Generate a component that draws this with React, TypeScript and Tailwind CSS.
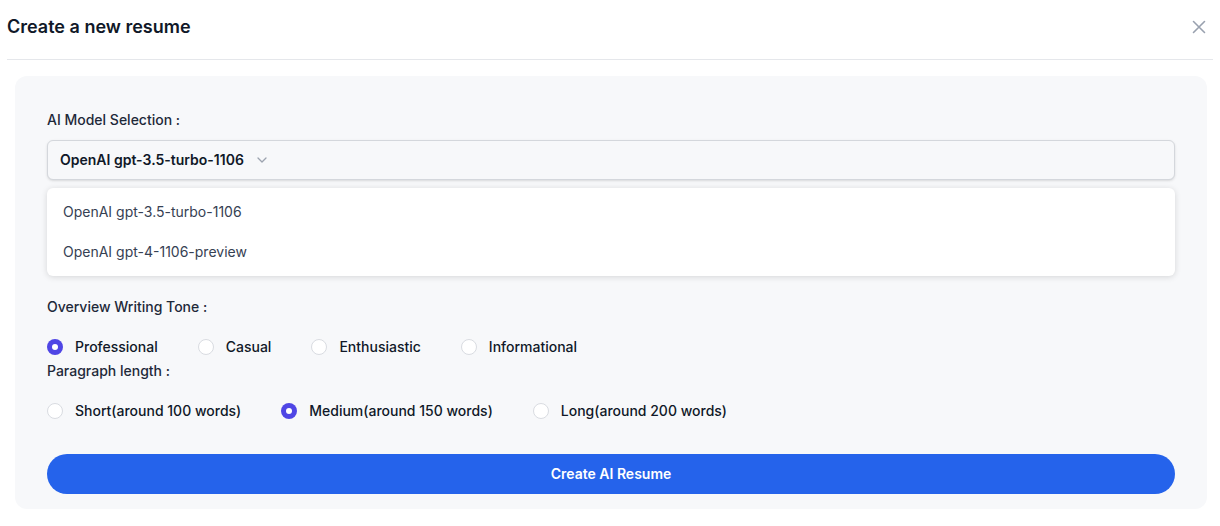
import React, { useState } from 'react';

const MODELS = ['OpenAI gpt-3.5-turbo-1106', 'OpenAI gpt-4-1106-preview'];
const TONES = ['Professional', 'Casual', 'Enthusiastic', 'Informational'];
const LENGTHS = ['Short(around 100 words)', 'Medium(around 150 words)', 'Long(around 200 words)'];

function Radio({ label, checked, onClick }: { label: string; checked: boolean; onClick: () => void }) {
  return (
    <label className="flex items-center gap-3 cursor-pointer h-5" onClick={onClick}>
      {checked ? (
        <span className="w-4 h-4 rounded-full bg-[#4f46e5] flex items-center justify-center">
          <span className="w-1.5 h-1.5 rounded-full bg-white"></span>
        </span>
      ) : (
        <span className="w-4 h-4 rounded-full bg-white border border-[#d9dce1]"></span>
      )}
      <span className="text-sm font-medium text-gray-900">{label}</span>
    </label>
  );
}

export default function App() {
  const [model] = useState(MODELS[0]);
  const [tone, setTone] = useState('Professional');
  const [length, setLength] = useState('Medium(around 150 words)');

  return (
    <div className="w-[1220px] h-[526px] bg-white px-[7px] font-['Inter',sans-serif] overflow-hidden">
      {/* Header */}
      <div className="flex items-center justify-between pt-[15px] pb-[20px] border-b border-gray-200">
        <h2 className="text-lg leading-6 font-semibold text-gray-900">Create a new resume</h2>
        <button className="mr-[7px] text-gray-400">
          <svg width="14" height="14" viewBox="0 0 14 14" fill="none" stroke="currentColor" strokeWidth="1.6" strokeLinecap="round">
            <path d="M1.5 1.5l11 11M12.5 1.5l-11 11" />
          </svg>
        </button>
      </div>

      {/* Panel */}
      <div className="ml-2 mr-[6px] mt-4 bg-[#f7f8fa] rounded-xl px-8 pt-[34px] pb-[15px]">
        <label className="block text-sm font-medium text-gray-800 leading-5">AI Model Selection :</label>
        <div className="mt-2.5 h-10 w-full border border-[#d4d7dc] rounded-md bg-[#f7f8fa] shadow-sm flex items-center px-3 gap-3">
          <span className="text-sm font-semibold text-gray-900">{model}</span>
          <svg width="12" height="12" viewBox="0 0 12 12" fill="none" stroke="#9ca3af" strokeWidth="1.3" strokeLinecap="round" strokeLinejoin="round">
            <path d="M2 4l4 4 4-4" />
          </svg>
        </div>

        {/* Dropdown */}
        <div className="mt-2 bg-white rounded-md shadow-[0_1px_6px_rgba(0,0,0,0.14)] py-1">
          {MODELS.map((m) => (
            <div key={m} className="h-10 flex items-center px-4 text-sm text-gray-700">
              {m}
            </div>
          ))}
        </div>

        <label className="block mt-[21px] text-sm font-medium text-gray-800 leading-5">Overview Writing Tone :</label>
        <div className="mt-5 flex items-center gap-10">
          {TONES.map((t) => (
            <Radio key={t} label={t} checked={tone === t} onClick={() => setTone(t)} />
          ))}
        </div>

        <label className="block mt-1 text-sm font-medium text-gray-800 leading-5">Paragraph length :</label>
        <div className="mt-5 flex items-center gap-10">
          {LENGTHS.map((l) => (
            <Radio key={l} label={l} checked={length === l} onClick={() => setLength(l)} />
          ))}
        </div>

        <button className="mt-[33px] w-full h-10 rounded-full bg-[#2563eb] text-white text-sm font-semibold">
          Create AI Resume
        </button>
      </div>
    </div>
  );
}
